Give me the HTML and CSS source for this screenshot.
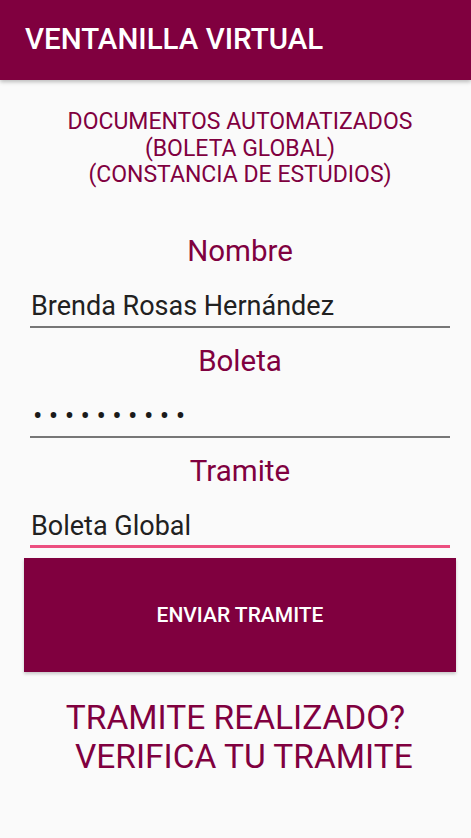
FILE: index.html
```html
<!DOCTYPE html>
<html lang="es">
<head>
<meta charset="utf-8">
<link rel="stylesheet" href="styles.css">
</head>
<body>
<header class="appbar"><h1 class="appbar-title">VENTANILLA VIRTUAL</h1></header>
<main class="content">
  <p class="subtitle">DOCUMENTOS AUTOMATIZADOS<br>(BOLETA GLOBAL)<br>(CONSTANCIA DE ESTUDIOS)</p>
  <div class="field field-first">
    <div class="label">Nombre</div>
    <div class="input">Brenda Rosas Hernández</div>
  </div>
  <div class="field">
    <div class="label">Boleta</div>
    <div class="input input-pass">••••••••••</div>
  </div>
  <div class="field">
    <div class="label">Tramite</div>
    <div class="input input-focus">Boleta Global</div>
  </div>
  <button class="btn">ENVIAR TRAMITE</button>
  <p class="verify">TRAMITE REALIZADO?
  VERIFICA TU TRAMITE</p>
</main>
</body>
</html>
```
FILE: styles.css
```css
* { box-sizing: border-box; }
html, body { margin: 0; padding: 0; }
body {
  background: #fafafa;
  font-family: Roboto, "Noto Sans", sans-serif;
  width: 471px;
  height: 838px;
  overflow: hidden;
}
.appbar {
  height: 80px;
  background: #80003f;
  display: flex;
  align-items: center;
  padding: 0 0 3px 25px;
  box-shadow: 0 2px 4px rgba(0,0,0,0.25);
  position: relative;
}
.appbar-title {
  margin: 0;
  color: #fff;
  font-weight: 500;
  font-size: 29.5px;
  line-height: 36px;
}
.content {
  padding: 0 15px 0 24px;
  display: flex;
  flex-direction: column;
}
.subtitle {
  margin: 29px 0 0;
  text-align: center;
  color: #80003f;
  font-size: 23px;
  line-height: 26.5px;
}
.field {
  display: flex;
  flex-direction: column;
  margin-top: 15px;
}
.field-first { margin-top: 44.5px; }
.label {
  text-align: center;
  color: #80003f;
  font-size: 29.5px;
  line-height: 36px;
}
.input {
  margin: 0 6px;
  padding: 18.5px 1px 0;
  height: 59px;
  color: #212121;
  font-size: 27px;
  line-height: 36px;
  border-bottom: 2px solid #777;
  white-space: nowrap;
}
.input-pass {
  padding: 19px 3px 0;
  font-size: 28px;
  letter-spacing: 6.4px;
  color: #1a1a1a;
}
.input-focus {
  height: 59px;
  border-bottom: 3px solid #ec4f80;
}
.btn {
  margin-top: 10px;
  height: 114px;
  border: 0;
  background: #80003f;
  color: #fff;
  font-family: Roboto, sans-serif;
  font-weight: 500;
  font-size: 21px;
  box-shadow: 0 2px 3px rgba(0,0,0,0.2);
}
.verify {
  margin: 27px -15px 0 -24px;
  text-align: center;
  color: #80003f;
  font-size: 33.5px;
  line-height: 38.5px;
  white-space: pre;
}
```
